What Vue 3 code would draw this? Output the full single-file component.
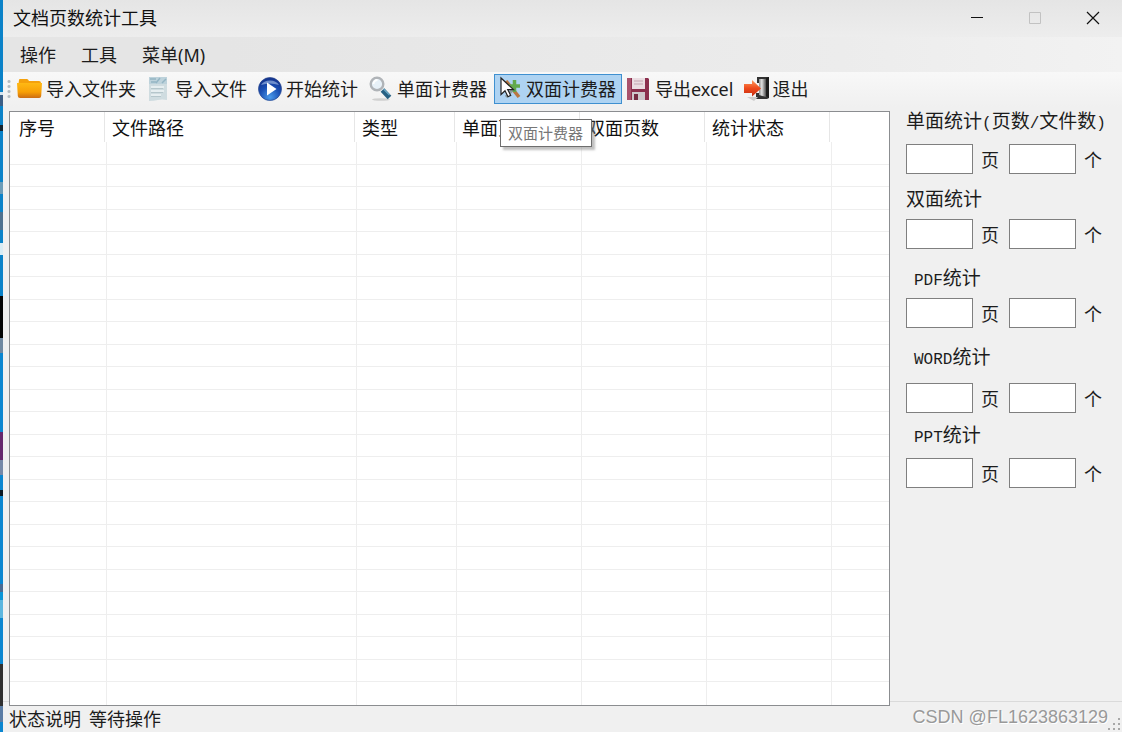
<script setup>
import { ref } from 'vue'

const menus = ['操作', '工具', '菜单(M)']
const tools = [
  { id: 'folder', label: '导入文件夹' },
  { id: 'file', label: '导入文件' },
  { id: 'play', label: '开始统计' },
  { id: 'search', label: '单面计费器' },
  { id: 'duplex', label: '双面计费器', active: true },
  { id: 'save', label: '导出excel' },
  { id: 'exit', label: '退出' }
]
const columns = ['序号', '文件路径', '类型', '单面页数', '双面页数', '统计状态', '']
const rowCount = 25
const stats = ref([
  { id: 'single', parts: [{ t: '单面统计' }, { t: '(', latin: true }, { t: '页数' }, { t: '/', latin: true }, { t: '文件数' }, { t: ')', latin: true }], pages: '', files: '' },
  { id: 'double', parts: [{ t: '双面统计' }], pages: '', files: '' },
  { id: 'pdf', parts: [{ t: 'PDF', latin: true }, { t: '统计' }], pages: '', files: '' },
  { id: 'word', parts: [{ t: 'WORD', latin: true }, { t: '统计' }], pages: '', files: '' },
  { id: 'ppt', parts: [{ t: 'PPT', latin: true }, { t: '统计' }], pages: '', files: '' }
])
</script>

<template>
  <div class="desktop">
    <div class="window">
      <header class="titlebar">
        <h1>文档页数统计工具</h1>
        <div class="controls">
          <button type="button" aria-label="最小化">
            <svg width="14" height="14" viewBox="0 0 14 14"><path d="M1 6.5h12" stroke="#111" fill="none" /></svg>
          </button>
          <button type="button" aria-label="最大化" disabled>
            <svg width="14" height="14" viewBox="0 0 14 14"><path d="M1.500 1.500h11v11h-11z" stroke="#c2c2c2" fill="none" /></svg>
          </button>
          <button type="button" aria-label="关闭">
            <svg width="14" height="14" viewBox="0 0 14 14"><path d="M1 1l12 12M13 1L1 13" stroke="#111" stroke-width="1.200" fill="none" /></svg>
          </button>
        </div>
      </header>

      <nav class="menubar">
        <button v-for="m in menus" :key="m" type="button">{{ m }}</button>
      </nav>

      <div class="toolbar" role="toolbar">
        <span class="grip"></span>
        <button v-for="t in tools" :key="t.id" type="button" class="tool" :class="{ active: t.active }">
          <svg class="icon" width="26" height="26" viewBox="0 0 26 26" aria-hidden="true">
            <defs>
              <linearGradient id="gFolder" x1="0" y1="0" x2="0" y2="1"><stop offset="0" stop-color="#ffb914" /><stop offset=".6" stop-color="#f8a006" /><stop offset="1" stop-color="#cc6d14" /></linearGradient>
              <radialGradient id="gPlay" cx=".5" cy=".85" r=".9"><stop offset="0" stop-color="#4a9aea" /><stop offset=".5" stop-color="#1a50b4" /><stop offset="1" stop-color="#122c84" /></radialGradient>
              <linearGradient id="gArrow" x1="0" y1="0" x2="0" y2="1"><stop offset="0" stop-color="#ff9a5c" /><stop offset=".5" stop-color="#ee4a1c" /><stop offset="1" stop-color="#c42c10" /></linearGradient>
              <linearGradient id="gDoor" x1="0" y1="0" x2="1" y2="0"><stop offset="0" stop-color="#8d8d8d" /><stop offset=".4" stop-color="#e2e2e2" /><stop offset="1" stop-color="#4d4d4d" /></linearGradient>
            </defs>
            <g v-if="t.id === 'folder'">
              <path d="M2 4q0-1 1-1h7q1 0 2 2h10q2 0 2 2v5H1z" fill="#f5a10c" />
              <path d="M0 7h25l-.8 13q-.2 2-2 2H3q-2 0-2.200-2z" fill="url(#gFolder)" />
            </g>
            <g v-else-if="t.id === 'file'">
              <path d="M3 1h18v23q-5-1-9 0t-9 1z" fill="#cfdce0" />
              <path d="M3 1h18v7H3z" fill="#bdd2db" />
              <path d="M4 3h6M5 6h5M16 7l4-4M10 7l4-5" stroke="#94b5c4" stroke-width="1.500" fill="none" />
              <path d="M5 11h13M5 15h13M5 19h10" stroke="#eef4f5" stroke-width="1.500" />
              <path d="M5 12.500h12M5 16.500h12M5 20.500h10" stroke="#afc0c5" stroke-width=".8" />
            </g>
            <g v-else-if="t.id === 'play'">
              <circle cx="13" cy="13" r="11.500" fill="url(#gPlay)" stroke="#29488e" stroke-width=".7" />
              <path d="M4 9a10 8 0 0 1 18 0q-9-3-18 0z" fill="#b9d2f2" opacity=".55" />
              <path d="M10 6.500v13l9.500-6.500z" fill="#fff" />
            </g>
            <g v-else-if="t.id === 'search'">
              <ellipse cx="13" cy="23.500" rx="9" ry="1.300" fill="#d0d0d0" />
              <path d="M14.500 14l7 7.500" stroke="#276083" stroke-width="5" />
              <path d="M15.500 13l6 6" stroke="#69a7c5" stroke-width="1.200" />
              <circle cx="9" cy="8" r="6.300" fill="#e7f1f8" stroke="#b0b4b8" stroke-width="2.400" />
              <path d="M5.500 8a4 4 0 0 1 4-4" stroke="#fff" stroke-width="1.800" fill="none" />
            </g>
            <g v-else-if="t.id === 'duplex'">
              <path d="M9 5l13 16" stroke="#b87742" stroke-width="3.500" />
              <path d="M9 21L18 11" stroke="#8c9b9e" stroke-width="3" />
              <path d="M17.500 4v12M12 10h11" stroke="#61a94c" stroke-width="3.500" />
              <path d="M4 2v16.500l4-3.800 3 6 2.700-1.300-3-5.800h5.800z" fill="#fff" stroke="#222" stroke-width="1.200" />
            </g>
            <g v-else-if="t.id === 'save'">
              <path d="M1 2h21l1 1v21H2l-1-1z" fill="#8c2f4e" />
              <path d="M1 2h4v22H1z" fill="#a9526c" />
              <path d="M6 2h13v11H6z" fill="#eadde2" />
              <path d="M8 5h9M8 8h9" stroke="#c4a5b0" />
              <path d="M6 16h13v8H6z" fill="#cfc6cc" />
              <path d="M8 18h4v6H8z" fill="#752a43" />
            </g>
            <g v-else>
              <path d="M14 1h12v21l-2 1H13v-6h3V7h-2z" fill="#333" />
              <path d="M16 3h7v18l-7-2z" fill="url(#gDoor)" />
              <path d="M23 2l3-1v21l-3-2z" fill="#1d1d1d" />
              <path d="M4 21h11l-4 4z" fill="#ccc" />
              <path d="M1 8h8V4l9 8.500-9 8V17H1z" fill="url(#gArrow)" />
            </g>
          </svg>
          <span>{{ t.label }}</span>
          <span v-if="t.active" class="tooltip" role="tooltip">{{ t.label }}</span>
        </button>
      </div>

      <main class="content">
        <div class="panel">
          <table>
            <thead>
              <tr><th v-for="(c, i) in columns" :key="i" scope="col">{{ c }}</th></tr>
            </thead>
            <tbody>
              <tr v-for="r in rowCount" :key="r"><td v-for="(c, i) in columns" :key="i"></td></tr>
            </tbody>
          </table>
        </div>

        <aside class="stats">
          <section v-for="s in stats" :key="s.id" class="stat" :class="s.id" role="group" :aria-labelledby="s.id + '-title'">
            <h2 :id="s.id + '-title'"><span v-for="(p, i) in s.parts" :key="i" :class="{ latin: p.latin }">{{ p.t }}</span></h2>
            <div class="fields">
              <input :id="s.id + '-pages'" v-model="s.pages" type="text" />
              <label :for="s.id + '-pages'">页</label>
              <input :id="s.id + '-files'" v-model="s.files" type="text" />
              <label :for="s.id + '-files'">个</label>
            </div>
          </section>
        </aside>
      </main>

      <footer class="status">
        <span>状态说明</span>
        <span>等待操作</span>
        <span class="credit">CSDN @FL1623863129</span>
        <svg class="resize" width="14" height="14" viewBox="0 0 14 14" aria-hidden="true">
          <path d="M10 0h2v2h-2zM5 5h2v2H5zM10 5h2v2h-2zM0 10h2v2H0zM5 10h2v2H5zM10 10h2v2h-2z" fill="#a8a8a8" />
        </svg>
      </footer>
    </div>
  </div>
</template>

<style>
body {
  margin: 0;
}
</style>

<style scoped>
* {
  box-sizing: border-box;
}
.desktop {
  min-height: 100vh;
  display: flex;
  padding-left: 3px;
  font: 18px/24px "Noto Sans", "Noto Sans CJK SC", sans-serif;
  color: #1c1c1c;
  background: linear-gradient(
    #0b82c8 92px, #d5e4ee 92px 95px, #3d5f86 95px 106px, #0b82c8 106px 125px,
    #12222e 125px 131px, #0b82c8 131px 182px, #6c9cb8 182px 194px, #0b82c8 194px 212px,
    #4f718f 212px 230px, #0b82c8 230px 243px, #d8ecf5 243px 255px, #0b82c8 255px 296px,
    #050505 296px 338px, #6f88a0 338px 353px, #0b86d0 353px 432px, #66286d 432px 460px,
    #7689a8 460px 475px, #0b86d0 475px 490px, #0d1a24 490px 496px, #0b86d0 496px 584px,
    #496b94 584px 592px, #0b96d8 592px 600px, #5cb6df 600px 618px, #0b86d0 618px 664px,
    #303030 664px 706px, #5a7ca4 706px 722px, #0b86d0 722px
  );
}
.window {
  flex: 1;
  display: flex;
  flex-direction: column;
  min-width: 0;
  background: #f0f0f0;
}
button {
  font: inherit;
  color: inherit;
  background: none;
  border: 0;
  padding: 0;
}
h1,
h2 {
  margin: 0;
  font-weight: 400;
}
.titlebar {
  height: 37px;
  display: flex;
  align-items: center;
  padding: 0 0 2px 10px;
  background: linear-gradient(#e5e5e5, #ededed);
}
.titlebar h1 {
  flex: 1;
  font-size: 18px;
  line-height: 24px;
  color: #111;
}
.controls {
  display: flex;
  align-self: stretch;
}
.controls button {
  width: 58px;
  display: flex;
  align-items: center;
  justify-content: center;
}
.menubar {
  height: 35px;
  display: flex;
  align-items: center;
  gap: 25px;
  padding-left: 17px;
  background: linear-gradient(90deg, #e5e5e5 20%, #ececec 75%, #f2f2f2);
}
.toolbar {
  height: 35px;
  display: flex;
  align-items: center;
  gap: 1px;
  padding: 0 0 2px 4px;
  background: linear-gradient(#f8f8f8, #f0f0f0);
}
.grip {
  width: 6px;
  height: 20px;
  background: radial-gradient(circle, #b4bcc2 1px, transparent 2px) 0 0 / 4px 5px repeat-y;
}
.tool {
  position: relative;
  height: 30px;
  display: flex;
  align-items: center;
  gap: 3px;
  padding: 0 5px 0 2px;
  border: 1px solid transparent;
  white-space: nowrap;
}
.tool.active {
  background: #aed3f2;
  border-color: #3f90d0;
}
.icon {
  flex: none;
}
.tooltip {
  position: absolute;
  left: 5px;
  top: 44px;
  z-index: 3;
  padding: 1px 8px 1px 7px;
  border: 1px solid #6e6e6e;
  background: #fff;
  color: #777;
  font-size: 15px;
  box-shadow: 3px 3px 2px #8888;
}
.content {
  flex: 1;
  display: flex;
  padding-left: 6px;
}
.panel {
  flex: 1;
  display: flex;
  margin-top: 4px;
  margin-bottom: -5px;
  z-index: 1;
  border: 1px solid #8b8d90;
  background: #fff;
}
table {
  flex: 1;
  display: flex;
  flex-direction: column;
}
tr {
  display: grid;
  grid-template-columns: 97px 250px 100px 125px 125px 125px 1fr;
}
thead tr {
  height: 30px;
  grid-template-columns: 95px 250px 100px 125px 125px 125px 1fr;
}
tbody {
  flex: 1;
  display: grid;
  grid-auto-rows: 1fr;
}
th {
  padding: 4px 0 0 7px;
  text-align: left;
  font-weight: 400;
  color: #111;
  border-right: 1px solid #e6e6e6;
}
th:first-child {
  padding-left: 9px;
}
td {
  padding: 0;
  border-right: 1px solid #eeeeee;
  border-bottom: 1px solid #eeeeee;
}
th:last-child,
td:last-child {
  border-right: 0;
}
tbody tr:last-child td {
  border-bottom: 0;
}
.stats {
  flex: none;
  width: 232px;
  padding: 1px 0 0 16px;
}
.stat {
  display: flex;
  flex-direction: column;
  gap: 9px;
  margin-bottom: 16px;
}
.stat h2 {
  height: 24px;
  font: 19px/24px "Noto Sans CJK SC", sans-serif;
  white-space: nowrap;
}
.stat .latin {
  font-family: "Liberation Mono", monospace;
  font-size: 16px;
}
.single,
.ppt {
  gap: 12px;
}
.single {
  margin-bottom: 12px;
}
.word {
  gap: 15px;
  margin-bottom: 9px;
}
.pdf h2,
.word h2,
.ppt h2 {
  padding-left: 8px;
}
.fields {
  display: flex;
  align-items: center;
}
.fields input {
  width: 67px;
  height: 30px;
  border: 1px solid #7f7f7f;
  background: #fff;
  padding: 0 4px;
  font: inherit;
}
.fields label {
  width: 36px;
  padding-left: 8px;
  font: 18px/24px "Noto Sans CJK SC", sans-serif;
}
.status {
  height: 31px;
  display: flex;
  align-items: center;
  gap: 8px;
  padding: 3px 0 0 6px;
  border-top: 1px solid #dadada;
}
.credit {
  margin-left: auto;
  padding-bottom: 4px;
  font: 18px/24px "Liberation Sans", Arial, sans-serif;
  color: #999;
  text-shadow: 1px 1px 0 #fff;
}
.resize {
  align-self: flex-end;
  margin-left: -8px;
}
</style>
